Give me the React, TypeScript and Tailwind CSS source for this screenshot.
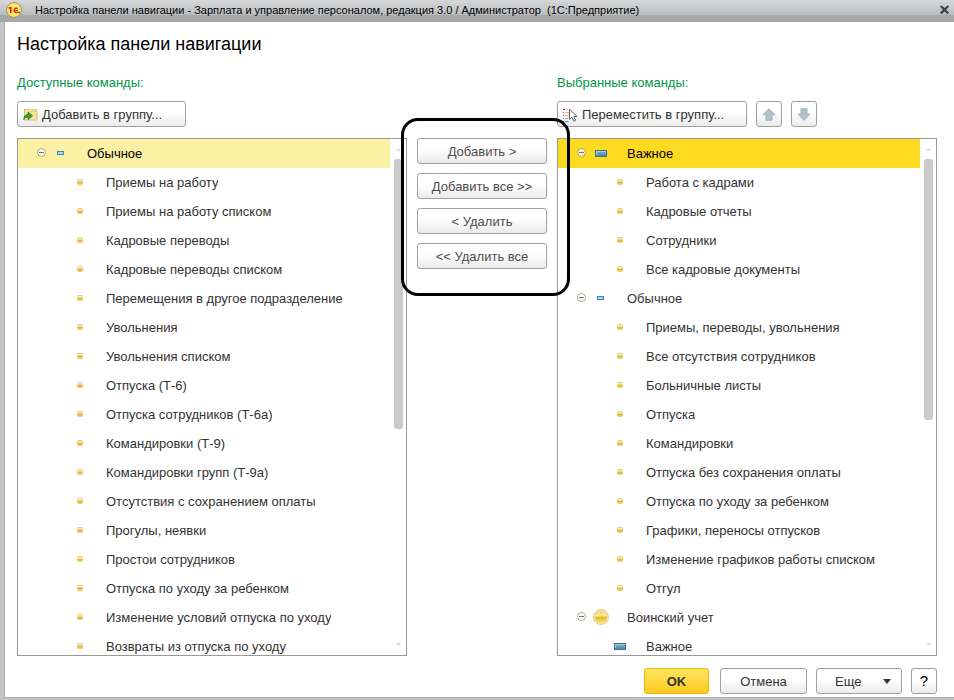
import type { ReactNode } from 'react';

type IconKind = 'dot' | 'normal' | 'important' | 'sphere';

interface Command {
  text: string;
  icon: IconKind;
  level: 1 | 2;
  group?: boolean;
}

const item = (text: string): Command => ({ text, icon: 'dot', level: 2 });

const available: Command[] = [
  { text: 'Обычное', icon: 'normal', level: 1, group: true },
  item('Приемы на работу'),
  item('Приемы на работу списком'),
  item('Кадровые переводы'),
  item('Кадровые переводы списком'),
  item('Перемещения в другое подразделение'),
  item('Увольнения'),
  item('Увольнения списком'),
  item('Отпуска (Т-6)'),
  item('Отпуска сотрудников (Т-6а)'),
  item('Командировки (Т-9)'),
  item('Командировки групп (Т-9а)'),
  item('Отсутствия с сохранением оплаты'),
  item('Прогулы, неявки'),
  item('Простои сотрудников'),
  item('Отпуска по уходу за ребенком'),
  item('Изменение условий отпуска по уходу'),
  item('Возвраты из отпуска по уходу'),
];

const selected: Command[] = [
  { text: 'Важное', icon: 'important', level: 1, group: true },
  item('Работа с кадрами'),
  item('Кадровые отчеты'),
  item('Сотрудники'),
  item('Все кадровые документы'),
  { text: 'Обычное', icon: 'normal', level: 1, group: true },
  item('Приемы, переводы, увольнения'),
  item('Все отсутствия сотрудников'),
  item('Больничные листы'),
  item('Отпуска'),
  item('Командировки'),
  item('Отпуска без сохранения оплаты'),
  item('Отпуска по уходу за ребенком'),
  item('Графики, переносы отпусков'),
  item('Изменение графиков работы списком'),
  item('Отгул'),
  { text: 'Воинский учет', icon: 'sphere', level: 1, group: true },
  { text: 'Важное', icon: 'important', level: 2 },
];

function CommandIcon({ kind }: { kind: IconKind }) {
  if (kind === 'dot') {
    return (
      <svg width="6" height="6" viewBox="0 0 6 6" aria-hidden="true">
        <rect width="6" height="6" rx="2.2" fill="url(#dotFill)" />
        <path d="M1.2 1.5h3.6" stroke="#fbf3cf" strokeWidth="1" />
      </svg>
    );
  }
  if (kind === 'normal') {
    return (
      <svg width="8" height="4" viewBox="0 0 8 4" aria-hidden="true">
        <rect x="0.5" y="0.5" width="6" height="3" fill="#a9dbf5" stroke="#3d86b8" />
      </svg>
    );
  }
  if (kind === 'important') {
    return (
      <svg width="12" height="7" viewBox="0 0 12 7" aria-hidden="true">
        <rect x="0.5" y="0.5" width="11" height="6" fill="url(#barFill)" stroke="#41708f" />
        <path d="M1 1.5h10M1.5 1v4" stroke="#a9cbe0" />
      </svg>
    );
  }
  return (
    <svg width="16" height="16" viewBox="0 0 16 16" aria-hidden="true">
      <circle cx="8" cy="8" r="7.5" fill="#f8ecb4" stroke="#e3cd85" strokeWidth="1" />
      <circle cx="8" cy="8" r="6.2" fill="url(#sphereFill)" />
    </svg>
  );
}

function SharedGradients() {
  return (
    <svg width="0" height="0" className="absolute" aria-hidden="true">
      <defs>
        <linearGradient id="dotFill" x1="0" y1="0" x2="0" y2="1">
          <stop offset="0" stopColor="#cfc39a" />
          <stop offset="0.4" stopColor="#f3dc7c" />
          <stop offset="0.6" stopColor="#e9b92f" />
          <stop offset="1" stopColor="#ecd08c" />
        </linearGradient>
        <linearGradient id="barFill" x1="0" y1="0" x2="0" y2="1">
          <stop offset="0" stopColor="#8fb9d3" />
          <stop offset="1" stopColor="#4781a8" />
        </linearGradient>
        <linearGradient id="sphereFill" x1="0" y1="0" x2="0" y2="1">
          <stop offset="0" stopColor="#eed27a" />
          <stop offset="0.42" stopColor="#fbeb95" />
          <stop offset="0.52" stopColor="#e9b921" />
          <stop offset="1" stopColor="#f9e36e" />
        </linearGradient>
      </defs>
    </svg>
  );
}

interface TreeProps {
  label: string;
  rows: Command[];
  highlight: string;
  thumb: string;
}

function CommandTree({ label, rows, highlight, thumb }: TreeProps) {
  return (
    <div className="flex min-h-0 flex-1 overflow-hidden border border-[#999999] bg-white">
      <ul role="tree" aria-label={label} className="min-w-0 flex-1">
        {rows.map((row, index) => (
          <li
            key={index}
            role="treeitem"
            aria-level={row.level}
            aria-selected={index === 0}
            className={`flex h-[29px] items-center ${index === 0 ? `${highlight} text-black` : ''} ${
              row.level === 1 ? 'pl-[19px]' : 'pl-[38px]'
            }`}
          >
            <span className="flex w-[10px] shrink-0 pb-[2px]">
              {row.group && (
                <button type="button" aria-label={`Свернуть ${row.text}`} className="block">
                  <svg width="9" height="9" viewBox="0 0 9 9" aria-hidden="true">
                    <circle cx="4.5" cy="4.5" r="4" fill="#fff" fillOpacity="0.65" stroke="#a3a08f" strokeWidth="0.9" />
                    <path d="M2 4.5h5" stroke="#77746a" />
                  </svg>
                </button>
              )}
            </span>
            <span className="flex w-7 shrink-0 justify-center pb-px">
              <CommandIcon kind={row.icon} />
            </span>
            <span className="truncate pl-3">{row.text}</span>
          </li>
        ))}
      </ul>
      <div className="flex w-4 shrink-0 flex-col items-center py-[9px]" aria-hidden="true">
        <svg width="5" height="3" viewBox="0 0 5 3">
          <path d="M2 0.5h1M1 1.5h3M0 2.5h5" stroke="#dedede" />
        </svg>
        <div className={`mt-2 w-[9px] rounded-[3px] bg-[#cacaca] ${thumb}`} />
        <svg width="5" height="3" viewBox="0 0 5 3" className="mt-auto">
          <path d="M2 2.5h1M1 1.5h3M0 0.5h5" stroke="#dedede" />
        </svg>
      </div>
    </div>
  );
}

function Button({ children, className = '', label }: { children: ReactNode; className?: string; label?: string }) {
  return (
    <button
      type="button"
      aria-label={label}
      className={`flex h-[26px] shrink-0 items-center rounded-[3px] border border-[#a0a0a0] bg-linear-to-b from-white from-40% to-[#ebebeb] ${className}`}
    >
      {children}
    </button>
  );
}

function ArrowIcon({ down = false }: { down?: boolean }) {
  return (
    <svg width="14" height="13" viewBox="0 0 14 13" className={down ? 'rotate-180' : ''} aria-hidden="true">
      <path d="M7 0.7L13 6.7H10V12.3H4V6.7H1z" fill="#b3c1c9" stroke="#9fb0ba" strokeLinejoin="round" />
    </svg>
  );
}

function FolderIcon() {
  return (
    <svg width="15" height="13" viewBox="0 0 15 13" aria-hidden="true">
      <path d="M1.5 1.5h5l1 1.5h6.5v9H1.5z" fill="#f6e5a0" stroke="#d8bf6c" />
      <path d="M8 1.5h5.5V3" fill="none" stroke="#e0ca7c" />
      <path d="M0.7 11.5C1 8 2.5 6.6 5 6.6V3.9L9.6 7.8L5 11.6V9.2C3 9.2 1.8 9.8 0.7 11.5z" fill="#3f9a2c" stroke="#26701a" strokeWidth="0.7" />
    </svg>
  );
}

function MoveIcon() {
  return (
    <svg width="15" height="14" viewBox="0 0 15 14" aria-hidden="true">
      <path d="M0 1.5h2" stroke="#e02d20" />
      <path d="M3 1.5h2" stroke="#eda59f" />
      <path d="M0 4.5h1M0 7.5h1M0 10.5h1" stroke="#777" />
      <path d="M2 4.5h4M2 7.5h4" stroke="#ecae82" />
      <path d="M2 10.5h3" stroke="#7fb4cf" />
      <path d="M0 13.5h1" stroke="#777" />
      <path d="M2 13.5h4" stroke="#4a9dc4" />
      <path d="M6.5 1.2v10.2l2.4-2.2l1.8 4l1.9-0.9l-1.8-3.8h3.3z" fill="#fff" stroke="#555" strokeWidth="0.9" />
    </svg>
  );
}

function Logo() {
  return (
    <svg width="16" height="16" viewBox="0 0 16 16" aria-hidden="true">
      <circle cx="8" cy="8" r="7.5" fill="#fbe766" stroke="#a98f68" />
      <path d="M4.8 5v6M2.6 6.3L4.8 5.4" fill="none" stroke="#e1241b" strokeWidth="1.6" />
      <path d="M11.6 6.6A2.2 2.2 0 1 0 9.4 10.4H14" fill="none" stroke="#e1241b" strokeWidth="1.4" />
      <path d="M9.2 8.5H12" stroke="#e1241b" strokeWidth="1" />
    </svg>
  );
}

export default function App() {
  return (
    <div className="flex h-screen flex-col overflow-hidden bg-[#c4c4c6] font-['Liberation_Sans',Arial,sans-serif] text-[13px] leading-4 text-[#333333]">
      <SharedGradients />
      <header className="flex h-[22px] shrink-0 items-center bg-linear-to-b from-[#d6d7d8] from-0% via-[#bcbdbf] via-65% to-[#a7a8aa] to-70% pr-1 pb-[2px] pl-[6px] text-[11px] text-black">
        <Logo />
        <span className="min-w-0 flex-1 truncate pl-[13px] whitespace-pre">
          {'Настройка панели навигации - Зарплата и управление персоналом, редакция 3.0 / Администратор  (1С:Предприятие)'}
        </span>
        <button type="button" aria-label="Закрыть" className="pb-px">
          <svg width="11" height="11" viewBox="0 0 11 11" aria-hidden="true">
            <path d="M1.8 2l7.4 7.4M9.2 2l-7.4 7.4" stroke="#444" strokeWidth="2.4" />
          </svg>
        </button>
      </header>

      <main className="mb-[2px] ml-1 flex min-h-0 flex-1 flex-col border-b border-l border-[#aaaaaa] bg-white pr-[17px] pb-[3px] pl-3">
        <h1 className="pt-3 text-lg leading-5 text-black">Настройка панели навигации</h1>

        <div className="grid min-h-0 flex-1 grid-cols-[39fr_130px_38fr] gap-x-[10px] pt-[21px]">
          <section className="flex min-h-0 min-w-0 flex-col">
            <h2 className="text-[#009646]">Доступные команды:</h2>
            <div className="flex pt-[10px] pb-[11px]">
              <Button className="w-[169px] gap-1 pt-px pl-[5px]">
                <FolderIcon />
                Добавить в группу...
              </Button>
            </div>
            <CommandTree label="Доступные команды" rows={available} highlight="bg-[#fcf0a4]" thumb="h-[270px]" />
          </section>

          <div className="pt-[63px]">
            <div className="relative flex flex-col gap-[9px] text-[#4d4d4d]">
              <Button className="justify-center pt-px">Добавить &gt;</Button>
              <Button className="justify-center pt-px">Добавить все &gt;&gt;</Button>
              <Button className="justify-center pt-px">&lt; Удалить</Button>
              <Button className="justify-center pt-px">&lt;&lt; Удалить все</Button>
              <div className="pointer-events-none absolute -top-5 -right-[23px] -bottom-[27px] -left-4 z-10 rounded-[17px] border-[3px] border-black" />
            </div>
          </div>

          <section className="flex min-h-0 min-w-0 flex-col">
            <h2 className="text-[#009646]">Выбранные команды:</h2>
            <div className="flex gap-[9px] pt-[10px] pb-[11px]">
              <Button className="w-[190px] gap-1 pt-px pl-[5px]">
                <MoveIcon />
                Переместить в группу...
              </Button>
              <Button className="w-[26px] justify-center" label="Вверх">
                <ArrowIcon />
              </Button>
              <Button className="w-[26px] justify-center" label="Вниз">
                <ArrowIcon down />
              </Button>
            </div>
            <CommandTree label="Выбранные команды" rows={selected} highlight="bg-[#fbda20]" thumb="h-[261px]" />
          </section>
        </div>

        <footer className="flex justify-end gap-[9px] pt-3">
          <button
            type="button"
            className="mr-[2px] h-[26px] w-[65px] rounded-[3px] border border-[#efb410] bg-linear-to-b from-[#ffe65c] to-[#fccb18] pt-px font-bold"
          >
            OK
          </button>
          <Button className="w-[87px] justify-center pt-px">Отмена</Button>
          <button
            type="button"
            aria-haspopup="menu"
            className="flex h-[26px] w-[86px] items-center justify-between rounded-[3px] border border-[#a0a0a0] bg-linear-to-b from-white from-40% to-[#ebebeb] pt-px pr-[10px] pl-[18px]"
          >
            Еще
            <svg width="8" height="5" viewBox="0 0 8 5" aria-hidden="true">
              <path d="M0 0h8L4 5z" fill="#333" />
            </svg>
          </button>
          <Button className="w-[26px] justify-center text-[15px] text-black">?</Button>
        </footer>
      </main>
    </div>
  );
}
